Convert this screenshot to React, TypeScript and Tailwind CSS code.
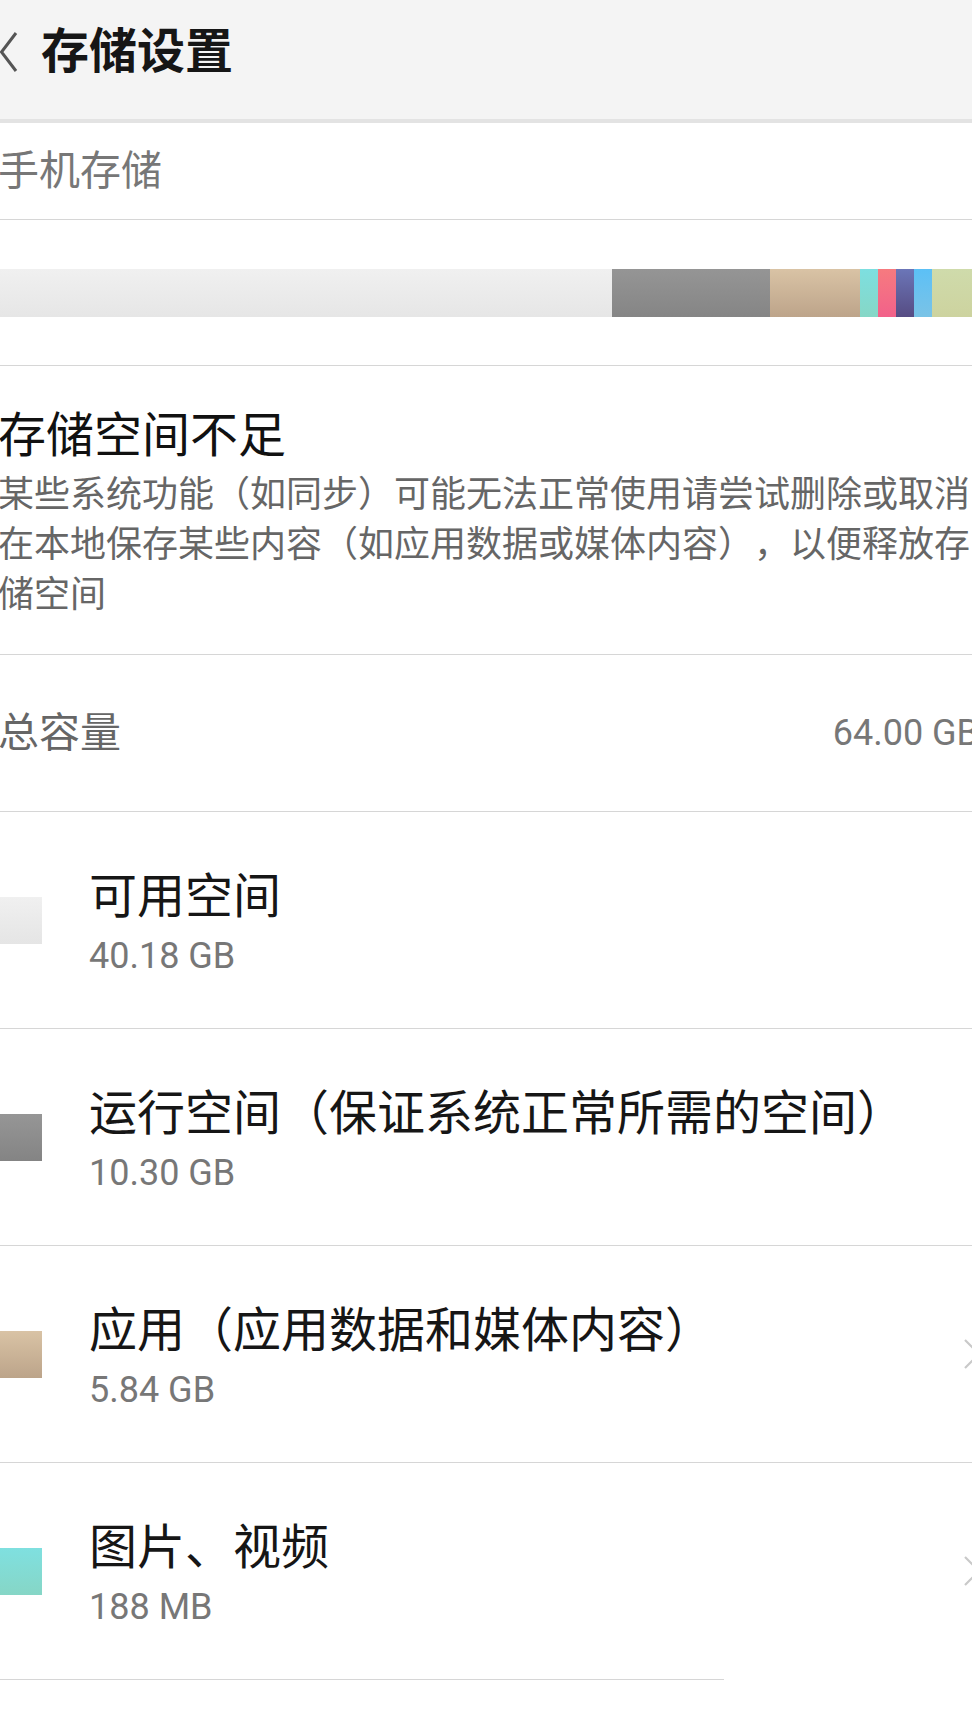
import React from "react";

const rows = [
  { title: "可用空间", size: "40.18 GB", swatch: "bg-gradient-to-b from-[#f0f0f0] to-[#e5e5e5]", arrow: false },
  { title: "运行空间（保证系统正常所需的空间）", size: "10.30 GB", swatch: "bg-gradient-to-b from-[#969696] to-[#848484]", arrow: false },
  { title: "应用（应用数据和媒体内容）", size: "5.84 GB", swatch: "bg-gradient-to-b from-[#d9c3a5] to-[#bca48a]", arrow: true },
  { title: "图片、视频", size: "188 MB", swatch: "bg-gradient-to-b from-[#7fe0e0] to-[#86d6c6]", arrow: true },
];

function Chevron() {
  return (
    <svg width="18" height="30" viewBox="0 0 18 30" className="shrink-0">
      <path d="M2 1 L16 15 L2 29" fill="none" stroke="#c9c9c9" strokeWidth="2.2" />
    </svg>
  );
}

export default function App() {
  return (
    <div
      className="w-[972px] h-[1728px] bg-white overflow-hidden [text-spacing-trim:space-all]"
      style={{ fontFamily: 'Roboto, "Noto Sans CJK SC", sans-serif' }}
    >
      {/* header */}
      <div className="h-[123px] bg-[#f4f4f4] border-b-4 border-[#e3e3e3] flex items-center pb-[15px]">
        <svg width="18" height="40" viewBox="0 0 18 40" className="shrink-0">
          <path d="M16 1 L1.5 20 L16 39" fill="none" stroke="#555" strokeWidth="3" />
        </svg>
        <h1 className="ml-[23px] text-[48px] leading-[56px] font-bold text-[#161616]">存储设置</h1>
      </div>

      <div className="h-[97px] flex items-center border-b border-[#d6d6d6] -ml-[2px]">
        <span className="text-[41px] leading-[48px] text-[#777]">手机存储</span>
      </div>

      {/* usage bar */}
      <div className="h-[146px] flex items-center border-b border-[#d6d6d6]">
        <div className="flex w-full h-[48px]">
          <div className="w-[612px] bg-gradient-to-b from-[#f0f0f0] to-[#e6e6e6]" />
          <div className="w-[158px] bg-gradient-to-b from-[#959595] to-[#858585]" />
          <div className="w-[90px] bg-gradient-to-b from-[#d9c3a5] to-[#bda48a]" />
          <div className="w-[18px] bg-gradient-to-b from-[#7ddfe0] to-[#86d7c6]" />
          <div className="w-[18px] bg-gradient-to-b from-[#f67a7f] to-[#f2618a]" />
          <div className="w-[18px] bg-gradient-to-b from-[#6b76b8] to-[#564c83]" />
          <div className="w-[18px] bg-gradient-to-b from-[#5bc0f6] to-[#7ac3e6]" />
          <div className="flex-1 bg-gradient-to-b from-[#cfdbab] to-[#cdd39f]" />
        </div>
      </div>

      {/* warning */}
      <div className="h-[289px] pt-[42px] border-b border-[#d6d6d6] -ml-[2px]">
        <h2 className="text-[48px] leading-[56px] text-[#111]">存储空间不足</h2>
        <p className="mt-[6px] text-[36px] leading-[50px] text-[#666] w-[980px]">
          某些系统功能（如同步）可能无法正常使用请尝试删除或取消在本地保存某些内容（如应用数据或媒体内容），以便释放存储空间
        </p>
      </div>

      {/* total */}
      <div className="h-[157px] flex items-center justify-between border-b border-[#d6d6d6] -ml-[2px] -mr-[7px]">
        <span className="text-[41px] leading-[48px] text-[#666]">总容量</span>
        <span className="text-[36px] leading-[44px] text-[#777] whitespace-nowrap">64.00 GB</span>
      </div>

      {rows.map((r, i) => (
        <div key={r.title}>
          <div className="h-[216px] flex items-center">
            <div className={`w-[42px] h-[47px] shrink-0 ${r.swatch}`} />
            <div className="ml-[47px] flex-1">
              <div className="text-[48px] leading-[66px] text-[#161616] whitespace-nowrap">{r.title}</div>
              <div className="mt-[5px] text-[36px] leading-[42px] text-[#777]">{r.size}</div>
            </div>
            {r.arrow && (
              <div className="w-[9px] overflow-hidden self-center">
                <Chevron />
              </div>
            )}
          </div>
          {i < rows.length - 1 ? (
            <div className="h-px bg-[#d6d6d6]" />
          ) : (
            <div className="h-px w-[724px] bg-[#d6d6d6]" />
          )}
        </div>
      ))}
    </div>
  );
}
